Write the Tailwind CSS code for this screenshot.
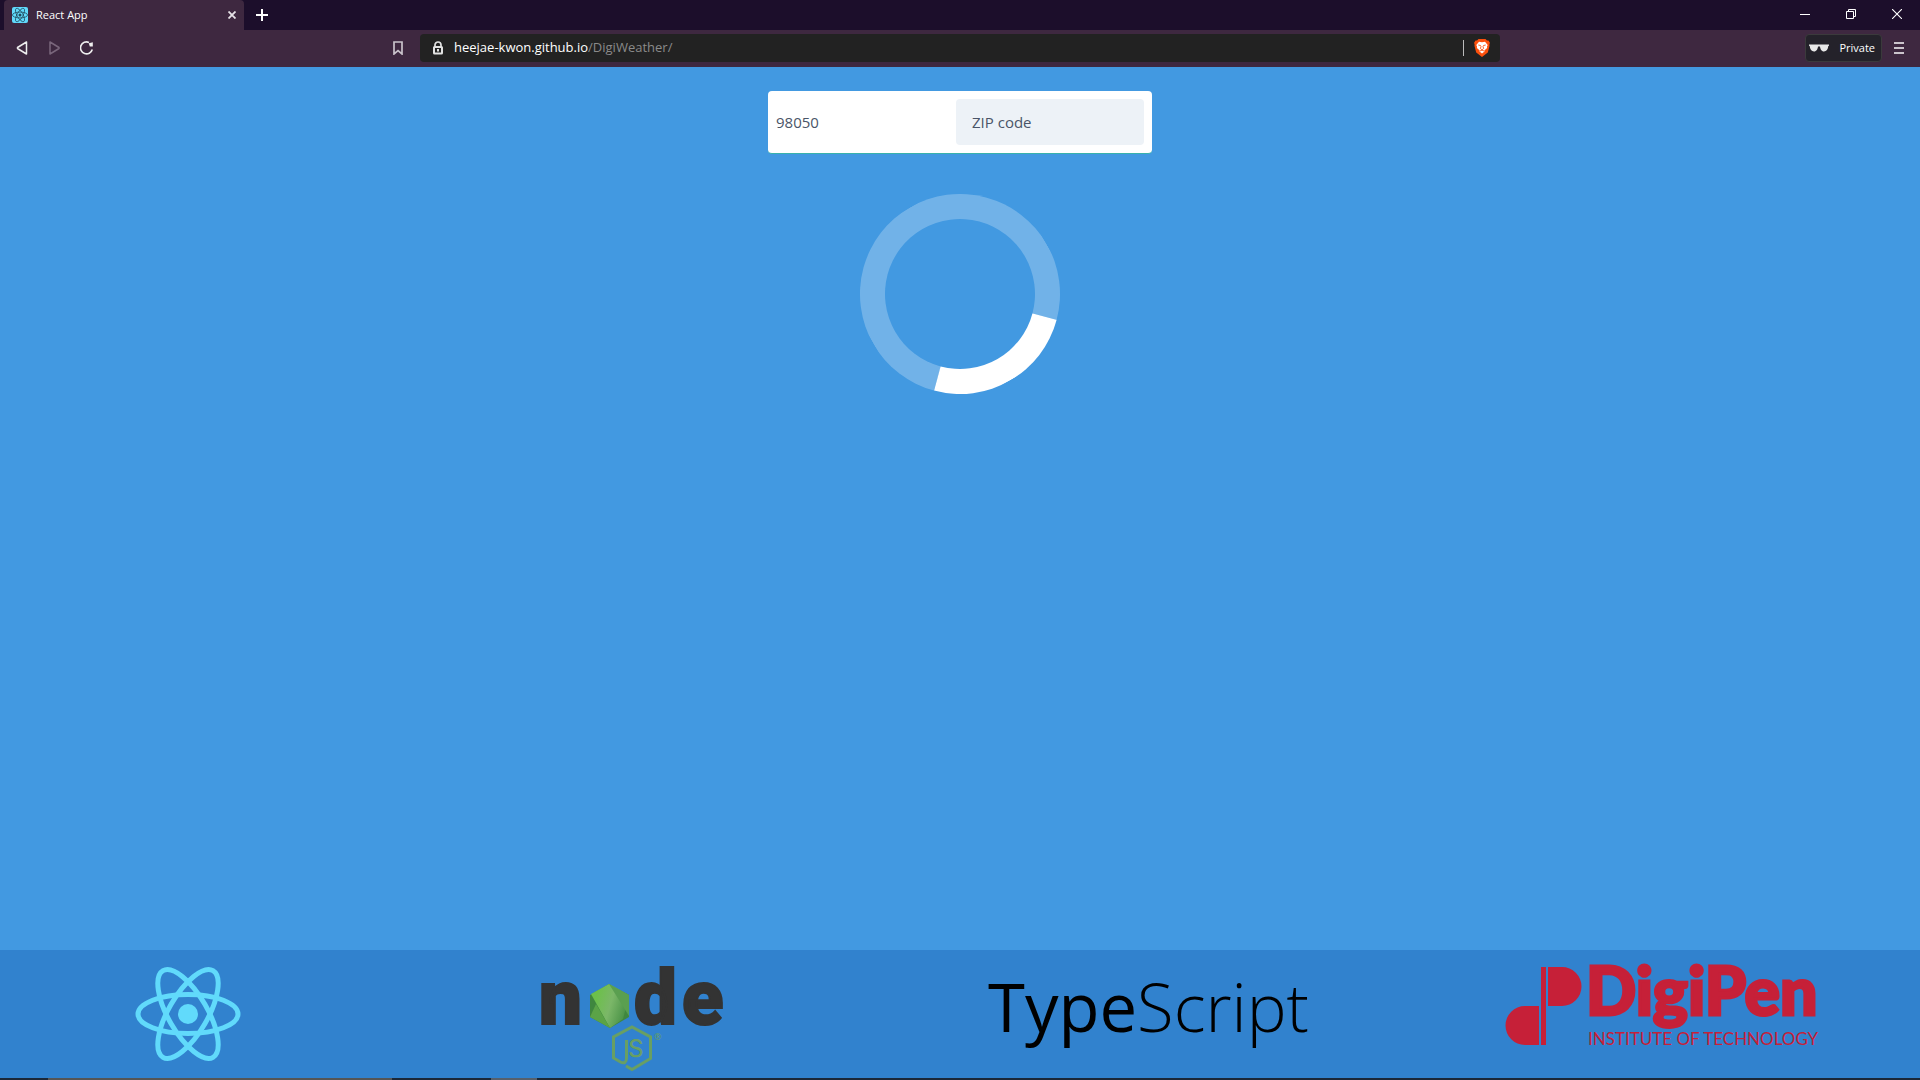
<!DOCTYPE html>
<html lang="en">
<head>
<meta charset="utf-8">
<title>React App</title>
<script src="https://cdn.jsdelivr.net/npm/@tailwindcss/browser@4"></script>
</head>
<body class="flex h-screen flex-col overflow-hidden bg-[#4299e1] font-['Open_Sans',sans-serif]">
<svg class="hidden">
  <symbol id="atom" viewBox="0 0 106 96"><g fill="none" stroke="currentColor" stroke-width="5"><ellipse cx="53" cy="48" rx="50" ry="19.5"/><ellipse cx="53" cy="48" rx="50" ry="19.5" transform="rotate(60 53 48)"/><ellipse cx="53" cy="48" rx="50" ry="19.5" transform="rotate(120 53 48)"/></g><circle cx="53" cy="48" r="10" fill="currentColor"/></symbol>
</svg>
<header class="text-white">
  <div class="flex h-[30px] items-stretch bg-[#1c0e2b] pl-1">
    <div class="flex w-60 items-center rounded-t bg-[#3e2840] px-2">
      <span class="flex size-4 items-center justify-center rounded-xs bg-[#61dafb] text-[#20485a]"><svg class="size-4"><use href="#atom"/></svg></span>
      <span class="ml-2 flex-1 text-[11px]">React App</span>
      <button aria-label="Close tab"><svg class="size-2" viewBox="0 0 8 8" stroke="#e6e2e7" stroke-width="1.8"><path d="M.5.5l7 7m0-7l-7 7"/></svg></button>
    </div>
    <button class="ml-3" aria-label="New tab"><svg class="size-3" viewBox="0 0 12 12" stroke="#fff" stroke-width="2"><path d="M6 0v12M0 6h12"/></svg></button>
    <div class="ml-auto flex items-center gap-9 pr-[18px] pb-0.5">
      <button aria-label="Minimize"><svg class="size-2.5" viewBox="0 0 10 10" stroke="#fff"><path d="M0 5.5h10"/></svg></button>
      <button aria-label="Restore"><svg class="size-2.5" viewBox="0 0 10 10" fill="none" stroke="#fff"><path d="M.5 2.500h7v7h-7zM2.500 2.500v-2h7v7h-2"/></svg></button>
      <button aria-label="Close"><svg class="size-2.5" viewBox="0 0 10 10" stroke="#fff" stroke-width="1.100"><path d="M0 0l10 10M10 0L0 10"/></svg></button>
    </div>
  </div>
  <div class="flex h-[37px] items-center bg-[#3e2840] px-4 pb-px">
    <nav class="flex flex-1 items-center gap-[18px]">
      <button aria-label="Back"><svg class="size-3.5" viewBox="0 0 14 14" fill="none" stroke="#eee" stroke-width="1.500" stroke-linejoin="round"><path d="M10.500 1v12L1.500 7.500V6.500z"/></svg></button>
      <button aria-label="Forward" disabled><svg class="size-3.5" viewBox="0 0 14 14" fill="none" stroke="#79667b" stroke-width="1.500" stroke-linejoin="round"><path d="M2 1v12l9-5.500v-1z"/></svg></button>
      <button aria-label="Reload"><svg class="size-3.5" viewBox="0 0 14 14" fill="none" stroke="#eee" stroke-width="1.600"><path d="M9 1.400A6 6 0 1 0 12.300 8.500"/><path d="M8.800 2.200l4-1v4.300h-3z" fill="#eee" stroke="none"/></svg></button>
      <button class="mr-[17px] ml-auto" aria-label="Bookmark"><svg class="h-3.5 w-2.5" viewBox="0 0 10 14" fill="none" stroke="#c9c2ca" stroke-width="1.700"><path d="M1 1h8v12L5 9.700 1 13z"/></svg></button>
    </nav>
    <div class="flex h-7 w-[1080px] items-center rounded bg-[#222] pr-2.5 pl-3">
      <svg class="h-3.5 w-3" viewBox="0 0 12 14" fill="none" stroke="#e2e2e2" stroke-width="2"><path d="M3 6V4a3 3 0 0 1 6 0v2" stroke-width="1.700"/><rect x="2" y="6" width="8" height="6.500" rx=".5"/><path d="M6 8v2.500"/></svg>
      <a href="#" class="ml-2.5 text-[13px] text-[#8a8a8a]"><span class="text-white">heejae-kwon.github.io</span>/DigiWeather/</a>
      <span class="mr-2.5 ml-auto h-4 w-px bg-[#bbb]"></span>
      <button aria-label="Brave Shields"><svg class="h-[18px] w-4" viewBox="0 0 16 18"><path d="M4.500 0h7l1.500 1.500h1.500L16 4l-.6 1 .1 2-1.700 6.500L8 18l-5.800-4.500L.5 7l.1-2L0 4l1.500-2.500H3z" fill="#fb4f0c"/><path d="M5 2.700l3 .6 3-.6 2.700 3.200-.7 1.600.1 1.500-2.800 2.500.2 1L8 14.500l-2.500-2 .2-1L2.900 9l.1-1.500-.7-1.600z" fill="#fff"/><path d="M4.300 6l2.200.5.5 1-.6 2L8 10.800l1.600-1.300-.6-2 .5-1 2.200-.5M6 12l2-.9 2 .9" fill="none" stroke="#fb4f0c" stroke-width=".9"/></svg></button>
    </div>
    <div class="flex flex-1 items-center justify-end gap-3">
      <button class="flex h-7 items-center gap-2.5 rounded border border-[#3b3a3c] bg-[#24222a] pr-1.5 pl-[3px] text-[11px]"><svg class="h-2 w-5" viewBox="0 0 20 8" fill="#e8e8e8"><path d="M0 .5h20v1.200l-.7.4C19 5.500 17.500 7.500 15 7.500S11.300 5 11 2.500H9C8.700 5 7.500 7.500 5 7.500S1 5.500.7 2.100L0 1.700z"/></svg>Private</button>
      <button aria-label="Menu"><svg class="h-3 w-2.5" viewBox="0 0 10 12" stroke="#cbc4cc" stroke-width="2"><path d="M0 1h10M0 6h10M0 11h10"/></svg></button>
    </div>
  </div>
</header>
<main class="flex flex-1 flex-col items-center pt-6">
  <form class="flex w-96 items-center rounded-sm border-b border-[#38b2ac] bg-white p-2 text-[15px] text-[#4a5568]">
    <input id="zip" value="98050" class="w-[180px] outline-none">
    <label for="zip" class="flex h-[46px] flex-1 items-center rounded-sm bg-[#edf2f7] px-4">ZIP code</label>
  </form>
  <div class="mt-10 size-[200px] rotate-[60deg] rounded-full border-[25px] border-white/25 border-r-white" role="status" aria-label="Loading"></div>
</main>
<footer class="flex h-32 items-center justify-around bg-[#3182ce]">
  <div class="flex w-[181px] justify-center text-[#61dafb]"><svg class="h-24 w-[106px]" role="img" aria-label="React"><use href="#atom"/></svg></div>
  <svg class="h-32 w-[322px]" viewBox="0 0 322 128" role="img" aria-label="Node.js">
    <defs><linearGradient id="leaf" x1="0" x2="1" y1="0" y2=".35"><stop offset=".2" stop-color="#6cc04a"/><stop offset=".6" stop-color="#7bb768"/><stop offset="1" stop-color="#4c9448"/></linearGradient></defs>
    <g fill="#333" stroke="#333" stroke-width="2" font-family="Roboto" font-weight="900" font-size="76"><text x="67" y="74">n</text><text x="162" y="74">d</text><text x="210" y="74">e</text></g>
    <path d="M137 34l20 11v22l-19 11-20-11V45z" fill="#3f873f"/>
    <path d="M137 34l20 11-6 24-13 9-19-34z" fill="url(#leaf)"/><path d="M118 67l6-13 14 24z" fill="#5ba347"/><path d="M137 34l20 32V45z" fill="#5a9f50"/>
    <path d="M154 116l6 3.500 18.500-11V87L160 77 141.500 87v21l7 4c4 2 6 0 6-4V90" fill="none" stroke="#689f63" stroke-width="3"/>
    <text x="156" y="107" fill="#689f63" font-family="Inter" font-weight="500" font-size="24">S</text>
    <text x="182" y="90" fill="#689f63" font-family="Open Sans" font-size="9">®</text>
  </svg>
  <div class="w-80 pb-4 text-[67px] leading-none whitespace-nowrap text-black"><span class="font-medium">Type</span><span class="font-light">Script</span></div>
  <svg class="h-32 w-[321px]" viewBox="0 0 321 128" role="img" aria-label="DigiPen Institute of Technology" fill="#c62038">
    <path d="M39 17h5v78h-5zM46 17h14a19.500 19.500 0 0 1 0 39H46zM37 56v39H23a19.500 19.500 0 0 1 0-39z"/>
    <text x="84" y="65" font-family="Lato" font-weight="900" font-size="66" stroke="#c62038" stroke-width="3">DigiPen</text>
    <text x="86" y="95" font-family="Lato" font-size="17">INSTITUTE OF TECHNOLOGY</text>
  </svg>
</footer>
<div class="flex h-0.5 bg-[#1b2838]"><span class="ml-12 w-[344px] bg-[#555]"></span><span class="ml-[99px] w-[46px] bg-[#56606c]"></span></div>
</body>
</html>
